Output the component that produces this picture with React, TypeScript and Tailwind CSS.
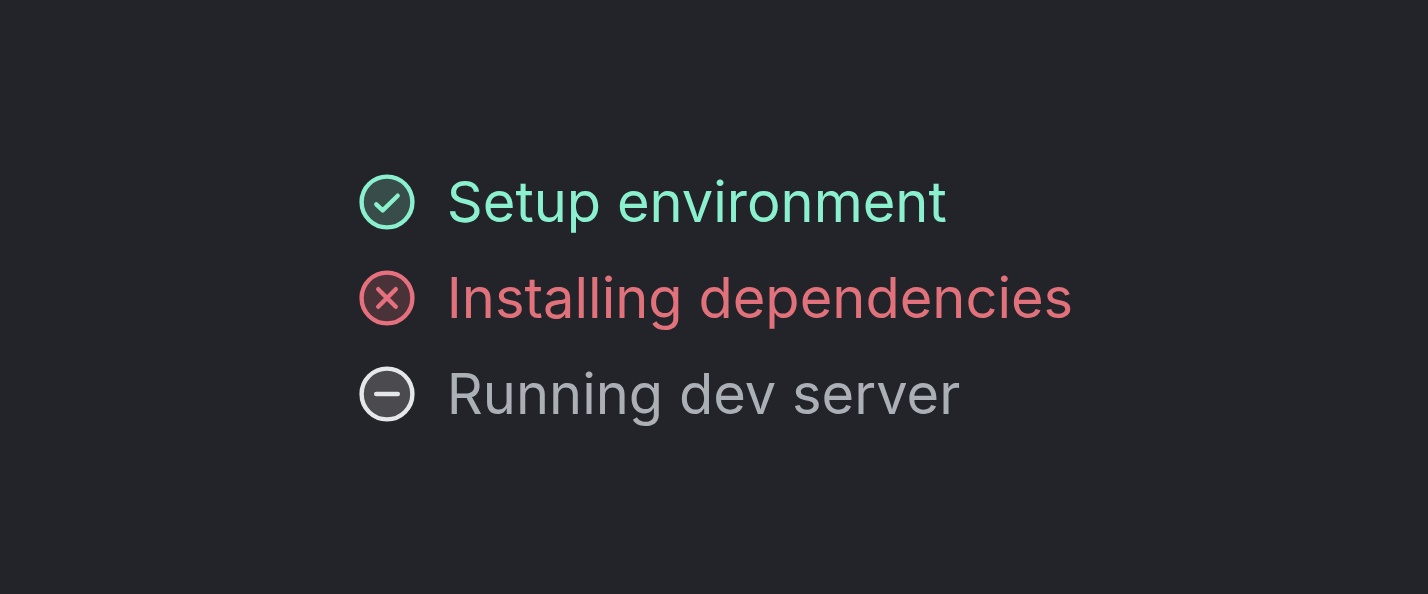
import React from "react";

type Status = "done" | "failed" | "pending";

const steps: { label: string; status: Status }[] = [
  { label: "Setup environment", status: "done" },
  { label: "Installing dependencies", status: "failed" },
  { label: "Running dev server", status: "pending" },
];

const textColor: Record<Status, string> = {
  done: "text-[#8bf0ce]",
  failed: "text-[#e1717b]",
  pending: "text-[#abafb6]",
};

const iconColor: Record<Status, string> = {
  done: "text-[#8bf0ce]",
  failed: "text-[#e6707d]",
  pending: "text-[#e6e7ea]",
};

const glyph: Record<Status, string> = {
  done: "M17.3 30.3 L23.7 36.4 L38.7 21.7",
  failed: "M19.2 19.2 L36.8 36.8 M36.8 19.2 L19.2 36.8",
  pending: "M17.2 28 H38.8",
};

function StatusIcon({ status }: { status: Status }) {
  return (
    <svg
      viewBox="0 0 56 56"
      className={`size-14 shrink-0 ${iconColor[status]}`}
      fill="none"
      stroke="currentColor"
      strokeWidth="4.4"
      strokeLinecap="round"
      strokeLinejoin="round"
      aria-hidden="true"
    >
      <circle cx="28" cy="28" r="27" fill="currentColor" fillOpacity="0.2" stroke="none" />
      <circle cx="28" cy="28" r="25.4" />
      <path d={glyph[status]} />
    </svg>
  );
}

export default function App() {
  return (
    <main className="flex min-h-screen items-center justify-center bg-[#232429] pt-0.5 pl-1 font-['Inter',sans-serif]">
      <ul className="flex flex-col gap-6">
        {steps.map((step) => (
          <li key={step.label} className="flex items-center gap-8">
            <StatusIcon status={step.status} />
            <span className={`text-[56px] leading-[72px] ${textColor[step.status]}`}>
              {step.label}
            </span>
          </li>
        ))}
      </ul>
    </main>
  );
}
